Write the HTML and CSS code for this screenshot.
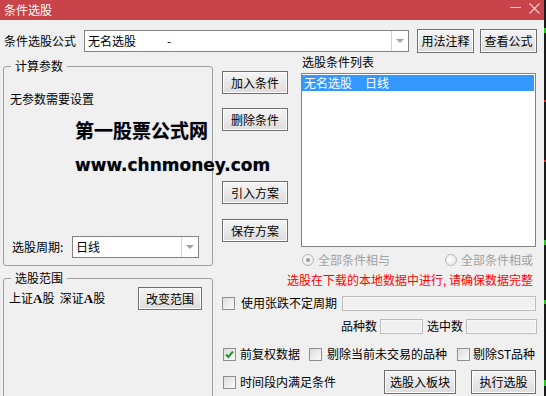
FILE: index.html
```html
<!DOCTYPE html>
<html lang="zh-CN">
<head>
<meta charset="utf-8">
<title>条件选股</title>
<link rel="stylesheet" href="styles.css">
</head>
<body>
<div class="app">
  <div class="win">
    <div class="titlebar">
      <span class="title">条件选股</span>
      <span class="tb-min"></span>
      <span class="tb-close"><svg width="11" height="11" viewBox="0 0 11 11"><path d="M0.5 0.5 L10.5 10.5 M10.5 0.5 L0.5 10.5" stroke="#f6d0d2" stroke-width="1.1" fill="none"/></svg></span>
    </div>

    <div class="formula-row">
      <span class="lbl">条件选股公式</span>
      <div class="combo wide">
        <span class="combo-text">无名选股<span class="dash">-</span></span>
        <span class="combo-btn"><i class="arrow"></i></span>
      </div>
      <button class="btn b-usage">用法注释</button>
      <button class="btn b-view">查看公式</button>
    </div>

    <div class="main">
      <div class="leftcol">
        <fieldset class="gb gb-calc">
          <legend>计算参数</legend>
          <div class="calc-body">
            <p class="noparam">无参数需要设置</p>
            <div class="period">
              <span class="period-lbl">选股周期:</span>
              <div class="combo small">
                <span class="combo-text">日线</span>
                <span class="combo-btn"><i class="arrow"></i></span>
              </div>
            </div>
          </div>
        </fieldset>
        <fieldset class="gb gb-range">
          <legend>选股范围</legend>
          <div class="range-row">
            <span>上证<b class="a">A</b>股&nbsp;&nbsp;深证<b class="a">A</b>股</span>
            <button class="btn b-range">改变范围</button>
          </div>
        </fieldset>
      </div>

      <div class="rightcol">
        <div class="top">
          <div class="midbtns">
            <button class="btn mb mb1">加入条件</button>
            <button class="btn mb mb2">删除条件</button>
            <button class="btn mb mb3">引入方案</button>
            <button class="btn mb mb4">保存方案</button>
          </div>
          <div class="listsec">
            <div class="listlbl">选股条件列表</div>
            <div class="listbox">
              <div class="sel">无名选股<span class="gap">日线</span></div>
            </div>
          </div>
        </div>

        <div class="radios">
          <span class="radio r1 on"></span><span class="rtext">全部条件相与</span>
          <span class="radio r2"></span><span class="rtext">全部条件相或</span>
        </div>

        <div class="warn">选股在下载的本地数据中进行, 请确保数据完整</div>

        <div class="row row-ud">
          <span class="cb"></span><span class="cbt">使用张跌不定周期</span>
          <span class="field f-ud"></span>
        </div>

        <div class="row row-count">
          <span class="cnt-lbl">品种数</span><span class="field f-n1"></span>
          <span class="cnt-lbl2">选中数</span><span class="field f-n2"></span>
        </div>

        <div class="row row-opts">
          <span class="cb c1 checked"><svg viewBox="0 0 11 11"><path d="M2 5.5 L4.3 8 L9 2.5"/></svg></span><span class="cbt">前复权数据</span>
          <span class="cb c2"></span><span class="cbt t2">剔除当前未交易的品种</span>
          <span class="cb c3"></span><span class="cbt t3">剔除ST品种</span>
        </div>

        <div class="row row-last">
          <span class="cb c1"></span><span class="cbt">时间段内满足条件</span>
          <button class="btn b-block">选股入板块</button>
          <button class="btn b-run">执行选股</button>
        </div>
      </div>
    </div>
  </div>
  <div class="edge"></div>

  <div class="watermark">
    <div class="wm1">第一股票公式网</div>
    <div class="wm2">www.chnmoney.com</div>
  </div>
</div>
</body>
</html>
```

FILE: styles.css
```css
* { box-sizing: border-box; }
html, body { margin: 0; padding: 0; }
body {
  font: 12px/16px "Noto Sans CJK SC", "Liberation Sans", sans-serif;
  color: #000;
  background: #1a1a1a;
}
.app {
  position: relative;
  display: flex;
  width: 546px;
  height: 396px;
  overflow: hidden;
}
.win {
  width: 544px;
  height: 396px;
  background: #f0f0f0;
  display: flex;
  flex-direction: column;
  overflow: hidden;
  flex: none;
}
.edge {
  width: 2px;
  height: 396px;
  flex: none;
  background:
    linear-gradient(#1a1a1a 0 28px, #2fc02f 28px 33px, #1a1a1a 33px 100px, #c33 100px 102px, #1a1a1a 102px 160px, #c33 160px 162px, #1a1a1a 162px 240px, #2fc02f 240px 245px, #1a1a1a 245px 300px, #2fc02f 300px 304px, #1a1a1a 304px 380px, #2fc02f 380px 386px, #1a1a1a 386px);
}

/* title bar */
.titlebar {
  flex: none;
  width: 544px;
  height: 20px;
  background: #c9434b;
  color: #fff;
  display: flex;
  align-items: flex-start;
  padding: 0 4px 0 4px;
}
.title { flex: 1 1 auto; line-height: 20px; }
.tb-min {
  flex: none;
  width: 11px;
  height: 1px;
  margin-top: 7px;
  margin-right: 8px;
  background: #f6d0d2;
}
.tb-close {
  flex: none;
  display: block;
  width: 11px;
  height: 11px;
  margin-top: 3px;
}
.tb-close svg { display: block; }

/* formula row */
.formula-row {
  flex: none;
  display: flex;
  align-items: center;
  height: 24px;
  margin-top: 9px;
  padding-left: 4px;
}
.lbl { width: 80px; white-space: nowrap; }
.combo {
  display: flex;
  height: 22px;
  border: 1px solid #828282;
  background: #fff;
  flex: none;
}
.combo.wide { width: 325px; }
.combo.small { width: 127px; }
.combo-text { flex: 1; padding-left: 3px; line-height: 20px; white-space: nowrap; }
.dash { margin-left: 31px; }
.combo-btn {
  width: 17px;
  border-left: 1px solid #d2d2d2;
  display: flex;
  align-items: center;
  justify-content: center;
}
.arrow {
  width: 0;
  height: 0;
  border-left: 4px solid transparent;
  border-right: 4px solid transparent;
  border-top: 4px solid #a3a3a3;
}
.btn {
  font: inherit;
  color: #000;
  height: 24px;
  padding: 0;
  margin: 0;
  border: 1px solid #707070;
  border-radius: 0;
  background: linear-gradient(#f5f5f5, #dcdcdc);
  box-shadow: inset 0 0 0 1px #fcfcfc;
  display: flex;
  align-items: center;
  justify-content: center;
  white-space: nowrap;
  flex: none;
}
.b-usage { width: 57px; margin-left: 8px; }
.b-view { width: 57px; margin-left: 6px; }

/* main */
.main { display: flex; flex: 1; min-height: 0; }
.leftcol {
  width: 210px;
  margin-left: 3px;
  display: flex;
  flex-direction: column;
  flex: none;
}
.gb {
  margin: 0;
  padding: 0;
  min-width: 0;
  border: 1px solid #a0a0a0;
  border-radius: 3px;
  flex: none;
}
.gb legend {
  margin-left: 7px;
  padding: 0 4px;
  line-height: 16px;
}
.gb-calc { margin-top: 5px; height: 208px; }
.calc-body {
  height: 191px;
  display: flex;
  flex-direction: column;
}
.noparam { margin: 17px 0 0 0; padding-left: 6px; }
.period {
  margin-top: auto;
  margin-bottom: 7px;
  display: flex;
  align-items: center;
  padding-left: 8px;
}
.period-lbl { width: 60px; white-space: nowrap; }
.gb-range { margin-top: 4px; height: 200px; }
.range-row {
  display: flex;
  align-items: center;
  margin-top: 1px;
  padding-left: 5px;
  white-space: nowrap;
}
.a { font-family: "Liberation Serif", serif; font-weight: bold; font-size: 13px; }
.b-range { width: 64px; height: 23px; margin-left: auto; margin-right: 10px; }

.rightcol {
  width: 314px;
  margin-left: 9px;
  display: flex;
  flex-direction: column;
  flex: none;
}
.top { display: flex; height: 194px; flex: none; }
.midbtns { width: 66px; display: flex; flex-direction: column; flex: none; }
.mb { width: 66px; height: 23px; }
.mb1 { margin-top: 18px; }
.mb2 { margin-top: 14px; }
.mb3 { margin-top: 50px; }
.mb4 { margin-top: 15px; }
.listsec { margin-left: 2px; width: 246px; }
.listlbl { margin-top: 1px; padding-left: 12px; }
.listbox {
  margin: 3px 0 0 11px;
  width: 235px;
  height: 174px;
  border: 1px solid #828282;
  background: #fff;
  padding: 1px 1px 1px 0;
}
.sel {
  height: 16px;
  background: #3399ff;
  color: #fff;
  line-height: 16px;
  padding-left: 2px;
  white-space: nowrap;
}
.gap { margin-left: 13px; }

.radios {
  display: flex;
  align-items: center;
  height: 16px;
  margin-top: 5px;
  color: #a0a0a0;
  flex: none;
}
.radio {
  width: 12px;
  height: 12px;
  border-radius: 50%;
  border: 1px solid #b8b8b8;
  background: radial-gradient(circle at 40% 40%, #fdfdfd, #e2e2e2);
  display: flex;
  align-items: center;
  justify-content: center;
  flex: none;
}
.radio.on::after {
  content: "";
  width: 4px;
  height: 4px;
  border-radius: 50%;
  background: #9a9a9a;
}
.r1 { margin-left: 80px; }
.r2 { margin-left: 55px; }
.rtext { margin-left: 4px; white-space: nowrap; }

.warn {
  color: #ff0000;
  margin-top: 4px;
  padding-left: 65px;
  white-space: nowrap;
  flex: none;
}

.row { display: flex; align-items: center; height: 16px; flex: none; white-space: nowrap; }
.cb {
  width: 13px;
  height: 13px;
  border: 1px solid #8f8f8f;
  background: linear-gradient(135deg, #dcdcdc, #fbfbfb);
  flex: none;
  display: flex;
  align-items: center;
  justify-content: center;
}
.cb svg { width: 11px; height: 11px; fill: none; stroke: #1f9a1f; stroke-width: 2; }
.cbt { margin-left: 5px; }
.field {
  height: 15px;
  border: 1px solid #bcbcbc;
  box-shadow: inset 0 0 0 1px #f8f8f8;
  background: #f0f0f0;
  flex: none;
}
.row-ud { margin-top: 7px; }
.row-ud .cbt { margin-left: 6px; }
.f-ud { flex: 1; margin-left: 5px; }
.row-count { margin-top: 7px; }
.cnt-lbl { margin-left: 119px; }
.f-n1 { width: 43px; margin-left: 3px; }
.cnt-lbl2 { margin-left: 4px; }
.f-n2 { width: 71px; margin-left: 3px; }
.row-opts { margin-top: 12px; }
.c1 { margin-left: 1px; }
.row-opts .cbt, .row-last .cbt { margin-left: 4px; }
.c2 { margin-left: 9px; }
.row-opts .t2 { margin-left: 5px; }
.c3 { margin-left: 10px; }
.row-opts .t3 { margin-left: 3px; }
.row-last { margin-top: 8px; height: 24px; }
.b-block { width: 72px; height: 24px; margin-left: auto; }
.b-run { width: 65px; height: 24px; margin-left: 15px; }

/* watermark overlay */
.watermark {
  position: absolute;
  left: 75px;
  top: 120px;
  color: #000;
  font-weight: bold;
  pointer-events: none;
  text-shadow: 0 0 1px rgba(20, 40, 160, 0.45);
}
.wm1 { font-size: 19px; line-height: 20px; white-space: nowrap; }
.wm2 {
  font-family: "DejaVu Sans", sans-serif;
  font-size: 17px;
  line-height: 20px;
  margin-top: 15px;
  white-space: nowrap;
}
```
